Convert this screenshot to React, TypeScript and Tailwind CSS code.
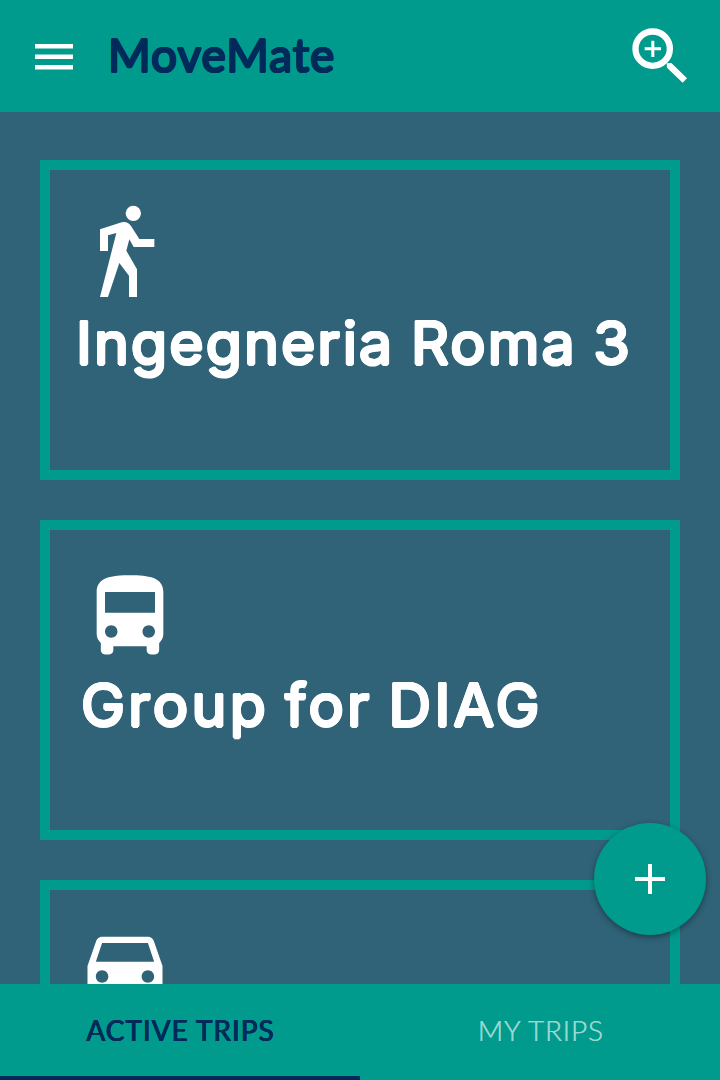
import type { ReactNode } from "react";

function WalkIcon() {
  return (
    <svg viewBox="180 135 165 276" className="ml-[50px] mt-[35px] block h-[92px] w-[55px] fill-white">
      <circle cx="280" cy="160" r="23" />
      <path d="M180 208L245 187Q262 182 273 198L298 237H343V261H281L268 238L259 272L291 328V411H267V347L238 309L204 411H180L229 219L204 226V273H180Z" />
    </svg>
  );
}

function BusIcon() {
  return (
    <svg viewBox="0 0 24 24" className="ml-[30px] mt-[37px] block size-[100px] fill-white">
      <path d="M4 16c0 .88.39 1.67 1 2.22V20c0 .55.45 1 1 1h1c.55 0 1-.45 1-1v-1h8v1c0 .55.45 1 1 1h1c.55 0 1-.45 1-1v-1.78c.61-.55 1-1.34 1-2.22V6c0-3.5-3.58-4-8-4s-8 .5-8 4v10zm3.5 1c-.83 0-1.5-.67-1.5-1.5S6.67 14 7.5 14s1.5.67 1.5 1.5S8.33 17 7.5 17zm9 0c-.83 0-1.5-.67-1.5-1.5s.67-1.5 1.5-1.5 1.5.67 1.5 1.5-.67 1.5-1.5 1.5zm1.5-6H6V6h12v5z" />
    </svg>
  );
}

function CarIcon() {
  return (
    <svg viewBox="0 0 24 24" className="ml-[25px] mt-[26px] block size-[100px] fill-white">
      <path d="M18.92 6.01C18.72 5.42 18.16 5 17.5 5h-11c-.66 0-1.21.42-1.42 1.01L3 12v8c0 .55.45 1 1 1h1c.55 0 1-.45 1-1v-1h12v1c0 .55.45 1 1 1h1c.55 0 1-.45 1-1v-8l-2.08-5.99zM6.5 16c-.83 0-1.5-.67-1.5-1.5S5.67 13 6.5 13s1.5.67 1.5 1.5S7.33 16 6.5 16zm11 0c-.83 0-1.5-.67-1.5-1.5s.67-1.5 1.5-1.5 1.5.67 1.5 1.5-.67 1.5-1.5 1.5zM5 11l1.5-4.5h11L19 11H5z" />
    </svg>
  );
}

function Card({ children }: { children: ReactNode }) {
  return (
    <article className="flex h-80 shrink-0 flex-col items-start border-[10px] border-[#009b8d]">{children}</article>
  );
}

// Eight zero-blur shadows thicken the strokes and round off their ends.
const ROUNDED =
  "whitespace-nowrap font-['Inter',sans-serif] text-[59px] leading-[72px] text-white [text-shadow:1.5px_0_#fff,-1.5px_0_#fff,0_1.5px_#fff,0_-1.5px_#fff,1.05px_1.05px_#fff,-1.05px_1.05px_#fff,1.05px_-1.05px_#fff,-1.05px_-1.05px_#fff]";

export default function App() {
  return (
    <div className="relative flex h-[1080px] w-[720px] flex-col overflow-hidden bg-[#306378] font-['Lato',sans-serif]">
      <header className="flex h-28 shrink-0 items-center bg-[#009b8d] pl-[35px] pr-[32px]">
        <button aria-label="Menu">
          <svg viewBox="0 0 38 26" className="mt-[2px] block h-[26px] w-[38px] fill-white">
            <path d="M0 0h38v4.6H0zM0 10.4h38v4.5H0zM0 20.9h38v4.6H0z" />
          </svg>
        </button>
        <h1 className="ml-[35px] mt-[-3px] text-[46px] leading-[56px] tracking-[1px] text-[#002a59] [text-shadow:1px_0_#002a59,-1px_0_#002a59,0_1px_#002a59,0_-1px_#002a59,.7px_.7px_#002a59,-.7px_.7px_#002a59,.7px_-.7px_#002a59,-.7px_-.7px_#002a59]">
          MoveMate
        </h1>
        <button aria-label="Search" className="ml-auto">
          <svg viewBox="96 84 168 168" className="block size-14">
            <circle cx="158" cy="146" r="51.5" fill="none" stroke="#fff" strokeWidth="19" />
            <path d="M134 142h20v-20h9v20h20v9h-20v20h-9v-20h-20zM200 190L214 189L261 235L248 248L201 203Z" fill="#fff" />
          </svg>
        </button>
      </header>

      <main className="flex min-h-0 flex-1 flex-col gap-10 overflow-hidden px-10 pt-12">
        <Card>
          <WalkIcon />
          <h2 className={`${ROUNDED} ml-[26px] mt-[10px] tracking-[2.1px] [word-spacing:-2px]`}>Ingegneria Roma 3</h2>
        </Card>
        <Card>
          <BusIcon />
          <h2 className={`${ROUNDED} ml-[31px] mt-[2px] tracking-[3.3px] [word-spacing:-4px]`}>Group for DIAG</h2>
        </Card>
        <Card>
          <CarIcon />
        </Card>
      </main>

      <nav className="grid h-24 shrink-0 grid-cols-2 bg-[#009b8d] text-[28px] leading-[34px]">
        <button className="flex items-center justify-center border-b-4 border-[#002a59] text-[#002a59]">
          <span className="-mr-px tracking-[.95px] [text-shadow:.4px_0_#002a59,-.4px_0_#002a59,0_.4px_#002a59,0_-.4px_#002a59]">ACTIVE TRIPS</span>
        </button>
        <button className="flex items-center justify-center border-b-4 border-transparent font-light text-[#99d7d1]">
          <span className="-mr-px tracking-[.8px] [text-shadow:.5px_0_#99d7d1]">MY TRIPS</span>
        </button>
      </nav>

      <button
        aria-label="Add trip"
        className="absolute bottom-[145px] right-[14px] flex size-28 items-center justify-center rounded-full bg-[#009b8d] shadow-[0_2px_6px_rgba(0,0,0,0.4)]"
      >
        <svg viewBox="0 0 30 30" className="size-[30px] fill-white">
          <path d="M13 0h4v13h13v4H17v13h-4V17H0v-4h13z" />
        </svg>
      </button>
    </div>
  );
}
